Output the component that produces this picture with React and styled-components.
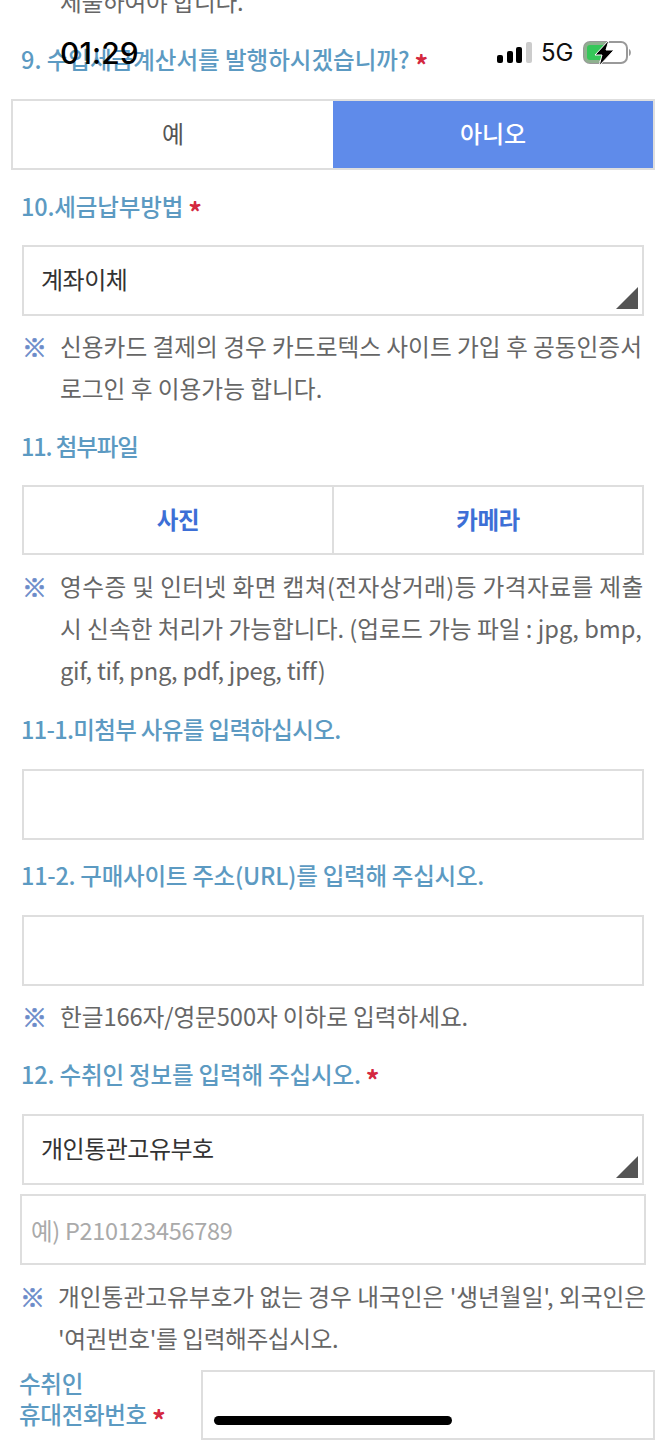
import React from "react";
import styled, { createGlobalStyle } from "styled-components";

const GlobalStyle = createGlobalStyle`
  html, body {
    margin: 0;
    padding: 0;
    background: #fff;
  }
  * {
    box-sizing: border-box;
  }
`;

const Screen = styled.div`
  position: relative;
  width: 666px;
  height: 1440px;
  overflow: hidden;
  background: #fff;
  font-family: "Noto Sans CJK KR", "Noto Sans", sans-serif;
`;

const Form = styled.div`
  display: flex;
  flex-direction: column;
  margin-top: -20px;
`;

const Label = styled.div`
  height: 40px;
  line-height: 40px;
  margin: ${(p) => p.$top || 0}px 0 ${(p) => p.$bottom ?? 20}px 21px;
  font-size: 23.5px;
  font-weight: 500;
  letter-spacing: ${(p) => p.$spacing ?? -0.15}px;
  color: #5c9ac2;
  white-space: nowrap;
`;

const Star = styled.span`
  margin-left: 5px;
  font-size: 27px;
  font-weight: 700;
  color: #d4283f;
  vertical-align: -7px;
  line-height: 0;
`;

const Toggle = styled.div`
  display: flex;
  height: 71px;
  margin: 0 11px;
  border: 2px solid #dedede;
`;

const ToggleOption = styled.div`
  flex: 1;
  display: flex;
  align-items: center;
  justify-content: center;
  padding-bottom: 4px;
  font-size: 24px;
  font-weight: ${(p) => (p.$active ? 500 : 400)};
  color: ${(p) => (p.$active ? "#fff" : "#555")};
  background: ${(p) => (p.$active ? "#5f8bea" : "#fff")};
`;

const Select = styled.div`
  position: relative;
  display: flex;
  align-items: center;
  height: 71px;
  margin: 0 22px;
  padding: 0 0 4px 17px;
  border: 2px solid #dedede;
  font-size: 24px;
  letter-spacing: -0.5px;
  color: #333;

  &::after {
    content: "";
    position: absolute;
    right: 4px;
    bottom: 5px;
    width: 22px;
    height: 22px;
    background: #555;
    clip-path: polygon(100% 0, 100% 100%, 0 100%);
  }
`;

const Input = styled.input`
  display: block;
  width: ${(p) => p.$width || "auto"};
  height: ${(p) => p.$height || 71}px;
  margin: ${(p) => p.$margin || "0 22px"};
  padding: 0 9px;
  border: 2px solid #dedede;
  border-radius: 0;
  outline: none;
  background: #fff;
  font-family: inherit;
  font-size: 23.5px;
  letter-spacing: -0.3px;

  &::placeholder {
    color: #aaa;
    opacity: 1;
  }
`;

const Note = styled.div`
  position: relative;
  margin: ${(p) => p.$top || 0}px 0 0 ${(p) => p.$left || 60}px;
  font-size: 23.7px;
  line-height: 42px;
  color: #666;
  white-space: pre;
`;

const NoteLine = styled.div`
  letter-spacing: ${(p) => p.$spacing || 0}px;
`;

const NoteMark = styled.span`
  position: absolute;
  left: -38px;
  top: 0;
  font-weight: 700;
  font-size: 25px;
  color: #6b8cc9;
  -webkit-text-stroke: 0.7px #6b8cc9;
`;

const ButtonRow = styled.div`
  display: flex;
  height: 70px;
  margin: 0 22px;
  border: 2px solid #dedede;
`;

const FileButton = styled.div`
  flex: 1;
  display: flex;
  align-items: center;
  justify-content: center;
  padding-bottom: 3px;
  font-size: 23.5px;
  font-weight: 700;
  letter-spacing: -0.4px;
  color: #3d6fd6;

  & + & {
    border-left: 2px solid #dedede;
  }
`;

const PhoneRow = styled.div`
  display: flex;
  align-items: flex-start;
  justify-content: space-between;
  margin: 11px 11px 0 19px;
`;

const PhoneLabel = styled.div`
  margin-top: -2px;
  font-size: 23.5px;
  line-height: 31px;
  font-weight: 500;
  letter-spacing: -0.3px;
  color: #5c9ac2;
  white-space: nowrap;
`;

const StatusBar = styled.div`
  position: absolute;
  top: 0;
  left: 0;
  right: 0;
  height: 80px;
  pointer-events: none;
`;

const Clock = styled.span`
  position: absolute;
  left: 60px;
  top: 36px;
  font-family: Inter, "Liberation Sans", sans-serif;
  font-size: 30px;
  line-height: 34px;
  font-weight: 500;
  letter-spacing: 0.1px;
  color: #000;
`;

const StatusIcons = styled.div`
  position: absolute;
  left: 497px;
  top: 40px;
  display: flex;
  align-items: center;
  gap: 9px;
  height: 26px;
`;

const Network = styled.span`
  font-family: Inter, "Liberation Sans", sans-serif;
  font-size: 24px;
  line-height: 26px;
  color: #111;
`;

const HomeIndicator = styled.div`
  position: absolute;
  left: 214px;
  top: 1416px;
  width: 238px;
  height: 9px;
  border-radius: 5px;
  background: #000;
`;

const Signal = () => (
  <svg width="35" height="22" viewBox="0 0 35 22">
    <rect x="0" y="13" width="6" height="8" rx="2" fill="#000" />
    <rect x="10" y="9" width="6" height="12" rx="2" fill="#000" />
    <rect x="19" y="5" width="6" height="16" rx="2" fill="#000" />
    <rect x="29" y="0" width="6" height="21" rx="2" fill="#ccc" />
  </svg>
);

const Battery = () => (
  <svg width="49" height="26" viewBox="0 0 49 26">
    <rect x="1" y="2" width="43" height="21" rx="6" fill="#fff" stroke="#999" strokeWidth="2" />
    <path d="M7 2 H24 L16 23 H7 A6 6 0 0 1 1 17 V8 A6 6 0 0 1 7 2 Z" fill="#8fb08f" />
    <rect x="4" y="5" width="19" height="15" rx="3" fill="#35c759" />
    <path d="M46 9 C48.5 10 48.5 15 46 16 Z" fill="#999" />
    <path d="M26 0 L12 15 H19 L16 26 L31 10 H23 Z" fill="#000" stroke="#fff" strokeWidth="1" />
  </svg>
);

const App = () => (
  <Screen>
    <GlobalStyle />
    <Form>
      <Note>
        <NoteLine $spacing={-0.3}>제출하여야 합니다.</NoteLine>
      </Note>
      <Label $top={17} $spacing={0}>
        9. 수입세금계산서를 발행하시겠습니까?<Star>*</Star>
      </Label>
      <Toggle>
        <ToggleOption>예</ToggleOption>
        <ToggleOption $active>아니오</ToggleOption>
      </Toggle>

      <Label $top={16} $bottom={19}>
        10.세금납부방법<Star>*</Star>
      </Label>
      <Select>계좌이체</Select>
      <Note $top={9}>
        <NoteMark>※</NoteMark>
        <NoteLine>신용카드 결제의 경우 카드로텍스 사이트 가입 후 공동인증서</NoteLine>
        <NoteLine>로그인 후 이용가능 합니다.</NoteLine>
      </Note>

      <Label $top={17} $bottom={19} $spacing={-1.1}>
        11. 첨부파일
      </Label>
      <ButtonRow>
        <FileButton>사진</FileButton>
        <FileButton>카메라</FileButton>
      </ButtonRow>
      <Note $top={10}>
        <NoteMark>※</NoteMark>
        <NoteLine $spacing={0.4}>영수증 및 인터넷 화면 캡쳐(전자상거래)등 가격자료를 제출</NoteLine>
        <NoteLine>시 신속한 처리가 가능합니다. (업로드 가능 파일 : jpg, bmp,</NoteLine>
        <NoteLine $spacing={-0.25}>gif, tif, png, pdf, jpeg, tiff)</NoteLine>
      </Note>

      <Label $top={18} $spacing={-0.65}>
        11-1.미첨부 사유를 입력하십시오.
      </Label>
      <Input />

      <Label $top={15} $spacing={-0.25}>
        11-2. 구매사이트 주소(URL)를 입력해 주십시오.
      </Label>
      <Input />
      <Note $top={9}>
        <NoteMark>※</NoteMark>
        <NoteLine $spacing={-0.1}>한글166자/영문500자 이하로 입력하세요.</NoteLine>
      </Note>

      <Label $top={17}>
        12. 수취인 정보를 입력해 주십시오.<Star>*</Star>
      </Label>
      <Select>개인통관고유부호</Select>
      <Input $margin="9px 20px 0" placeholder="예) P210123456789" />
      <Note $top={10} $left={58}>
        <NoteMark>※</NoteMark>
        <NoteLine>개인통관고유부호가 없는 경우 내국인은 '생년월일', 외국인은</NoteLine>
        <NoteLine $spacing={-0.4}>'여권번호'를 입력해주십시오.</NoteLine>
      </Note>

      <PhoneRow>
        <PhoneLabel>
          수취인
          <br />
          휴대전화번호<Star>*</Star>
        </PhoneLabel>
        <Input $width="454px" $height={70} $margin="0" />
      </PhoneRow>
    </Form>

    <StatusBar>
      <Clock>01:29</Clock>
      <StatusIcons>
        <Signal />
        <Network>5G</Network>
        <Battery />
      </StatusIcons>
    </StatusBar>
    <HomeIndicator />
  </Screen>
);

export default App;
